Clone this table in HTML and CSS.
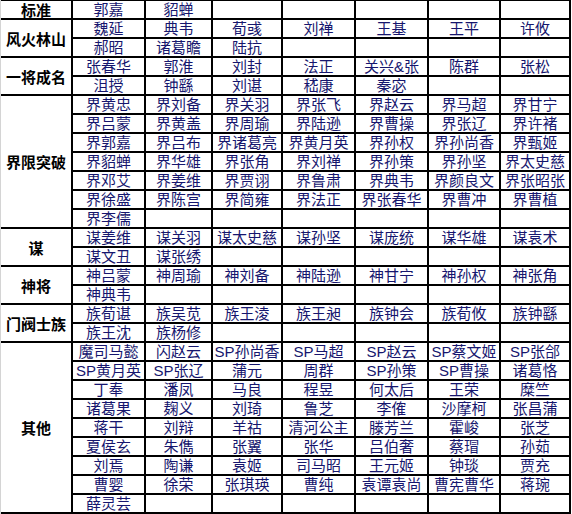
FILE: index.html
```html
<!DOCTYPE html>
<html lang="zh-CN">
<head>
<meta charset="utf-8">
<title>武将表</title>
<link rel="stylesheet" href="styles.css">
</head>
<body>
<div class="sheet">
  <div class="cat span1">标准</div>
  <div class="c">郭嘉</div><div class="c">貂蝉</div><div class="c"></div><div class="c"></div><div class="c"></div><div class="c"></div><div class="c"></div>

  <div class="cat span2">风火林山</div>
  <div class="c">魏延</div><div class="c">典韦</div><div class="c">荀彧</div><div class="c">刘禅</div><div class="c">王基</div><div class="c">王平</div><div class="c">许攸</div>
  <div class="c">郝昭</div><div class="c">诸葛瞻</div><div class="c">陆抗</div><div class="c"></div><div class="c"></div><div class="c"></div><div class="c"></div>

  <div class="cat span2">一将成名</div>
  <div class="c">张春华</div><div class="c">郭淮</div><div class="c">刘封</div><div class="c">法正</div><div class="c">关兴&amp;张</div><div class="c">陈群</div><div class="c">张松</div>
  <div class="c">沮授</div><div class="c">钟繇</div><div class="c">刘谌</div><div class="c">嵇康</div><div class="c">秦宓</div><div class="c"></div><div class="c"></div>

  <div class="cat span7">界限突破</div>
  <div class="c">界黄忠</div><div class="c">界刘备</div><div class="c">界关羽</div><div class="c">界张飞</div><div class="c">界赵云</div><div class="c">界马超</div><div class="c">界甘宁</div>
  <div class="c">界吕蒙</div><div class="c">界黄盖</div><div class="c">界周瑜</div><div class="c">界陆逊</div><div class="c">界曹操</div><div class="c">界张辽</div><div class="c">界许褚</div>
  <div class="c">界郭嘉</div><div class="c">界吕布</div><div class="c">界诸葛亮</div><div class="c">界黄月英</div><div class="c">界孙权</div><div class="c">界孙尚香</div><div class="c">界甄姬</div>
  <div class="c">界貂蝉</div><div class="c">界华雄</div><div class="c">界张角</div><div class="c">界刘禅</div><div class="c">界孙策</div><div class="c">界孙坚</div><div class="c">界太史慈</div>
  <div class="c">界邓艾</div><div class="c">界姜维</div><div class="c">界贾诩</div><div class="c">界鲁肃</div><div class="c">界典韦</div><div class="c">界颜良文</div><div class="c">界张昭张</div>
  <div class="c">界徐盛</div><div class="c">界陈宫</div><div class="c">界简雍</div><div class="c">界法正</div><div class="c">界张春华</div><div class="c">界曹冲</div><div class="c">界曹植</div>
  <div class="c">界李儒</div><div class="c"></div><div class="c"></div><div class="c"></div><div class="c"></div><div class="c"></div><div class="c"></div>

  <div class="cat span2">谋</div>
  <div class="c">谋姜维</div><div class="c">谋关羽</div><div class="c">谋太史慈</div><div class="c">谋孙坚</div><div class="c">谋庞统</div><div class="c">谋华雄</div><div class="c">谋袁术</div>
  <div class="c">谋文丑</div><div class="c">谋张绣</div><div class="c"></div><div class="c"></div><div class="c"></div><div class="c"></div><div class="c"></div>

  <div class="cat span2">神将</div>
  <div class="c">神吕蒙</div><div class="c">神周瑜</div><div class="c">神刘备</div><div class="c">神陆逊</div><div class="c">神甘宁</div><div class="c">神孙权</div><div class="c">神张角</div>
  <div class="c">神典韦</div><div class="c"></div><div class="c"></div><div class="c"></div><div class="c"></div><div class="c"></div><div class="c"></div>

  <div class="cat span2">门阀士族</div>
  <div class="c">族荀谌</div><div class="c">族吴苋</div><div class="c">族王淩</div><div class="c">族王昶</div><div class="c">族钟会</div><div class="c">族荀攸</div><div class="c">族钟繇</div>
  <div class="c">族王沈</div><div class="c">族杨修</div><div class="c"></div><div class="c"></div><div class="c"></div><div class="c"></div><div class="c"></div>

  <div class="cat span9">其他</div>
  <div class="c">魔司马懿</div><div class="c">闪赵云</div><div class="c">SP孙尚香</div><div class="c">SP马超</div><div class="c">SP赵云</div><div class="c">SP蔡文姬</div><div class="c">SP张郃</div>
  <div class="c">SP黄月英</div><div class="c">SP张辽</div><div class="c">蒲元</div><div class="c">周群</div><div class="c">SP孙策</div><div class="c">SP曹操</div><div class="c">诸葛恪</div>
  <div class="c">丁奉</div><div class="c">潘凤</div><div class="c">马良</div><div class="c">程昱</div><div class="c">何太后</div><div class="c">王荣</div><div class="c">糜竺</div>
  <div class="c">诸葛果</div><div class="c">麹义</div><div class="c">刘琦</div><div class="c">鲁芝</div><div class="c">李傕</div><div class="c">沙摩柯</div><div class="c">张昌蒲</div>
  <div class="c">蒋干</div><div class="c">刘辩</div><div class="c">羊祜</div><div class="c">清河公主</div><div class="c">滕芳兰</div><div class="c">霍峻</div><div class="c">张芝</div>
  <div class="c">夏侯玄</div><div class="c">朱儁</div><div class="c">张翼</div><div class="c">张华</div><div class="c">吕伯奢</div><div class="c">蔡瑁</div><div class="c">孙茹</div>
  <div class="c">刘焉</div><div class="c">陶谦</div><div class="c">袁姬</div><div class="c">司马昭</div><div class="c">王元姬</div><div class="c">钟琰</div><div class="c">贾充</div>
  <div class="c">曹婴</div><div class="c">徐荣</div><div class="c">张琪瑛</div><div class="c">曹纯</div><div class="c">袁谭袁尚</div><div class="c">曹宪曹华</div><div class="c">蒋琬</div>
  <div class="c">薛灵芸</div><div class="c"></div><div class="c"></div><div class="c"></div><div class="c"></div><div class="c"></div><div class="c"></div>
</div>
</body>
</html>
```

FILE: styles.css
```css
html, body {
  margin: 0;
  padding: 0;
  background: #ffffff;
}

.sheet {
  display: grid;
  grid-template-columns: 70px 71px 65px 68px 71px 71px 70px 68px;
  grid-auto-rows: 17px;
  gap: 2px;
  width: max-content;
  background: #000000;
  padding: 2px 2px 2px 0;
  margin-top: -1px;
  border-left: 1px solid #d4d4d4;
  font-family: "Liberation Sans", "Noto Sans CJK SC", sans-serif;
  font-size: 15px;
}

.c {
  background: #ffffff;
  color: #16166e;
  text-align: center;
  line-height: 17px;
  white-space: nowrap;
  overflow: visible;
}

.cat {
  grid-column: 1;
  background: #ffffff;
  color: #000000;
  font-weight: bold;
  display: flex;
  align-items: center;
  justify-content: center;
  white-space: nowrap;
}

.span1 { grid-row: span 1; }
.span2 { grid-row: span 2; }
.span7 { grid-row: span 7; }
.span9 { grid-row: span 9; }
```
